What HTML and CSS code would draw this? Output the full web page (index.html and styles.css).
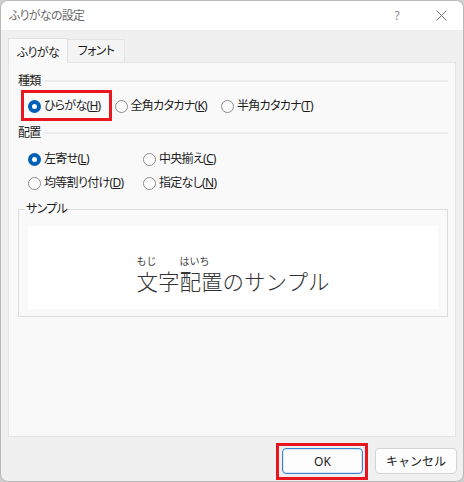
FILE: index.html
```html
<!DOCTYPE html>
<html lang="ja">
<head>
<meta charset="utf-8">
<title>ふりがなの設定</title>
<link rel="stylesheet" href="styles.css">
</head>
<body>
<div class="window">
  <div class="titlebar">
    <span class="title">ふりがなの設定</span>
    <span class="help">?</span>
    <span class="close">
      <svg width="11" height="11" viewBox="0 0 11 11"><path d="M0.5 0.5 L10.5 10.5 M10.5 0.5 L0.5 10.5" stroke="#707070" stroke-width="1" fill="none"/></svg>
    </span>
  </div>
  <div class="content">
    <div class="tabs">
      <div class="tab active">ふりがな</div>
      <div class="tab">フォント</div>
    </div>
    <div class="panel">
      <div class="heading"><span>種類</span><span class="rule"></span></div>
      <div class="type-row">
        <label class="radio marked"><span class="dot on"></span><span>ひらがな(<u>H</u>)</span></label>
        <label class="radio"><span class="dot"></span><span>全角カタカナ(<u>K</u>)</span></label>
        <label class="radio"><span class="dot"></span><span>半角カタカナ(<u>T</u>)</span></label>
      </div>
      <div class="heading second"><span>配置</span><span class="rule"></span></div>
      <div class="align-grid">
        <label class="radio"><span class="dot on"></span><span>左寄せ(<u>L</u>)</span></label>
        <label class="radio"><span class="dot"></span><span>中央揃え(<u>C</u>)</span></label>
        <label class="radio"><span class="dot"></span><span>均等割り付け(<u>D</u>)</span></label>
        <label class="radio"><span class="dot"></span><span>指定なし(<u>N</u>)</span></label>
      </div>
      <fieldset class="sample">
        <legend>サンプル</legend>
        <div class="sample-area">
          <div class="sample-text">
            <span class="rb"><span class="rt">もじ</span><span class="base">文字</span></span>
            <span class="rb"><span class="rt">はいち</span><span class="base">配置</span></span>
            <span class="rb"><span class="rt">&nbsp;</span><span class="base">のサンプル</span></span>
          </div>
        </div>
      </fieldset>
    </div>
    <div class="footer">
      <button class="btn default marked-btn">OK</button>
      <button class="btn cancel">キャンセル</button>
    </div>
  </div>
</div>
</body>
</html>
```

FILE: styles.css
```css
html, body {
  margin: 0;
  height: 100%;
}
body {
  background: #cfcfcf;
  font-family: "Noto Sans", "Noto Sans CJK JP", sans-serif;
  font-size: 12px;
  letter-spacing: -0.7px;
  color: #1b1b1b;
  font-feature-settings: "palt";
}
.window {
  width: 464px;
  height: 482px;
  box-sizing: border-box;
  border: 1px solid #b9b9b9;
  border-radius: 8px;
  overflow: hidden;
  display: flex;
  flex-direction: column;
  background: #f0f0f0;
}
.titlebar {
  height: 29px;
  flex: none;
  background: #ffffff;
  display: flex;
  align-items: center;
  padding-left: 8px;
  padding-right: 16px;
}
.title {
  color: #6a6a6a;
  line-height: 16px;
}
.help {
  margin-left: auto;
  margin-right: 37px;
  color: #8a8a8a;
  font-size: 12px;
  line-height: 16px;
}
.close {
  display: flex;
  width: 11px;
  height: 11px;
}
.content {
  flex: 1;
  display: flex;
  flex-direction: column;
  padding: 8px 7px 0 7px;
}
.tabs {
  display: flex;
  align-items: flex-end;
  height: 24px;
}
.tab {
  box-sizing: border-box;
  height: 23px;
  width: 57px;
  text-align: center;
  line-height: 22px;
  background: #f4f4f4;
  border: 1px solid #e4e4e4;
  border-left: none;
  border-bottom: none;
}
.tab.active {
  width: 60px;
  height: 25px;
  line-height: 27px;
  margin-bottom: -1px;
  background: #f9f9f9;
  border: 1px solid #e0e0e0;
  border-bottom: none;
  position: relative;
  z-index: 1;
}
.panel {
  box-sizing: border-box;
  height: 375px;
  background: #f9f9f9;
  border: 1px solid #e4e4e4;
  padding: 10px 7px 0 9px;
}
.heading {
  display: flex;
  align-items: center;
  gap: 3px;
  line-height: 16px;
}
.heading.second {
  margin-top: 11px;
}
.rule {
  flex: 1;
  height: 2px;
  background: #ebebeb;
}
.radio {
  display: inline-flex;
  align-items: center;
  gap: 3px;
  line-height: 16px;
  white-space: nowrap;
}
.dot {
  box-sizing: border-box;
  width: 13px;
  height: 13px;
  border-radius: 50%;
  border: 1px solid #8b8b8b;
  background: #fcfcfc;
}
.dot.on {
  border: 4px solid #005fb8;
  background: #ffffff;
}
.type-row {
  display: flex;
  gap: 14px;
  margin: 9px 0 0 10px;
}
.align-grid {
  display: grid;
  grid-template-columns: 115px auto;
  row-gap: 8px;
  margin: 10px 0 0 10px;
}
.marked {
  position: relative;
}
.marked::after {
  content: "";
  position: absolute;
  top: -8px;
  bottom: -7px;
  left: -7px;
  right: -11px;
  border: 3px solid #e8161e;
}
.sample {
  margin: 10px 0 0 0;
  border: 1px solid #dcdcdc;
  padding: 0 9px 7px 9px;
}
.sample legend {
  padding: 0 1px;
  margin-left: -3px;
  line-height: 16px;
}
.sample-area {
  margin-top: 9px;
  height: 83px;
  box-sizing: border-box;
  background: #ffffff;
  display: flex;
  justify-content: center;
  padding-top: 28px;
}
.sample-text {
  display: flex;
  color: #333333;
  letter-spacing: 0;
  font-family: "Noto Sans CJK JP", sans-serif;
}
.rb {
  display: flex;
  flex-direction: column;
  align-items: flex-start;
}
.rt {
  font-size: 10px;
  line-height: 13px;
  color: #444444;
  font-feature-settings: normal;
}
.base {
  font-size: 21.5px;
  line-height: 27px;
  font-weight: 300;
  font-feature-settings: normal;
}
.footer {
  display: flex;
  justify-content: flex-end;
  gap: 12px;
  margin: 11px -1px 0 0;
}
.btn {
  box-sizing: border-box;
  height: 26px;
  width: 82px;
  font-family: inherit;
  font-size: 12px;
  letter-spacing: 0;
  color: #1b1b1b;
  background: #fdfdfd;
  border: 1px solid #d4d4d4;
  border-radius: 4px;
  padding: 0;
}
.btn.default {
  width: 81px;
  border: 1px solid #3b84d0;
  box-shadow: inset 0 0 0 1px #d6e6f7;
}
.marked-btn {
  position: relative;
}
.marked-btn::after {
  content: "";
  position: absolute;
  top: -6px;
  bottom: -7px;
  left: -7px;
  right: -6px;
  border: 3px solid #e8161e;
}
```
